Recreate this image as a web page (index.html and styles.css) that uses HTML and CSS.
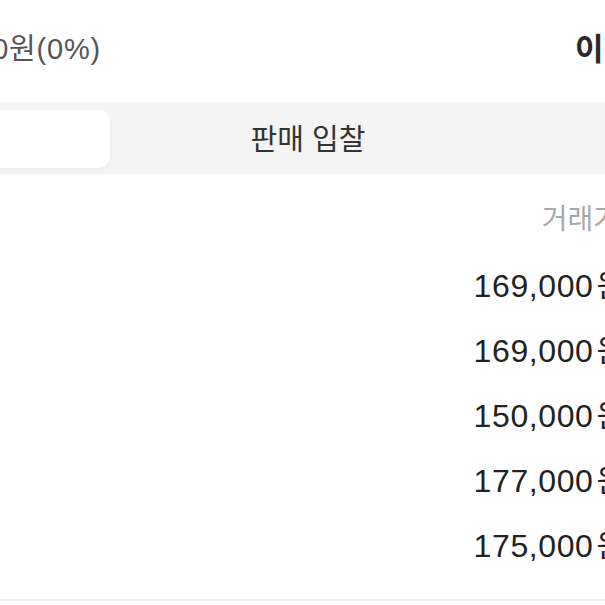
FILE: index.html
```html
<!DOCTYPE html>
<html lang="ko">
<head>
<meta charset="utf-8">
<title>시세</title>
<link rel="stylesheet" href="styles.css">
</head>
<body>
<div class="screen">
  <div class="summary">
    <span class="change">+0원(0%)</span>
    <span class="recent">이전 거래</span>
  </div>
  <div class="tabs">
    <div class="tab active">체결 거래</div>
    <div class="tab">판매 입찰</div>
    <div class="tab">구매 입찰</div>
  </div>
  <div class="table">
    <div class="row head">
      <span class="size">사이즈</span>
      <span class="price">거래가</span>
      <span class="date">거래일</span>
    </div>
    <div class="row">
      <span class="size">270</span>
      <span class="price"><span class="num">169,000</span>원</span>
      <span class="date">23/05/12</span>
    </div>
    <div class="row">
      <span class="size">265</span>
      <span class="price"><span class="num">169,000</span>원</span>
      <span class="date">23/05/10</span>
    </div>
    <div class="row">
      <span class="size">260</span>
      <span class="price"><span class="num">150,000</span>원</span>
      <span class="date">23/05/08</span>
    </div>
    <div class="row">
      <span class="size">275</span>
      <span class="price"><span class="num">177,000</span>원</span>
      <span class="date">23/05/05</span>
    </div>
    <div class="row">
      <span class="size">270</span>
      <span class="price"><span class="num">175,000</span>원</span>
      <span class="date">23/05/02</span>
    </div>
  </div>
  <div class="divider"></div>
</div>
</body>
</html>
```

FILE: styles.css
```css
html, body {
  margin: 0;
  padding: 0;
  background: #ffffff;
  overflow: hidden;
}

body {
  width: 605px;
  height: 605px;
  font-family: "Liberation Sans", "Noto Sans CJK KR", sans-serif;
  color: #222222;
}

.screen {
  margin-left: -293px;
  width: 1202px;
}

.summary {
  display: flex;
  align-items: center;
  gap: 474px;
  height: 102px;
  padding-bottom: 10px;
  box-sizing: border-box;
}

.change {
  flex: 0 0 394px;
  text-align: right;
  font-size: 29px;
  letter-spacing: 0.8px;
  color: #555555;
  white-space: nowrap;
}

.recent {
  font-size: 31px;
  font-weight: 700;
  color: #2a2a2a;
  white-space: nowrap;
  font-family: "Noto Sans CJK KR", sans-serif;
}

.tabs {
  display: grid;
  grid-template-columns: repeat(3, 1fr);
  background: #f4f4f4;
  padding: 8px 7px 6px;
  height: 72px;
  box-sizing: border-box;
}

.tab {
  display: flex;
  align-items: center;
  justify-content: center;
  font-family: "Noto Sans CJK KR", sans-serif;
  font-size: 29px;
  color: #333333;
  border-radius: 11px;
  padding-bottom: 5px;
  box-sizing: border-box;
}

.tab.active {
  background: #ffffff;
  box-shadow: 0 1px 3px rgba(0, 0, 0, 0.06);
}

.table {
  margin-top: 17px;
}

.row {
  display: grid;
  grid-template-columns: 1fr 300px 260px;
  align-items: center;
  height: 65px;
  padding: 0 24px;
}

.row.head {
  height: 52px;
  margin-bottom: 8px;
}

.row.head span {
  font-family: "Noto Sans CJK KR", sans-serif;
  font-size: 28px;
  color: #a8a8a8;
}

.row.head .price {
  margin-right: 6px;
}

.size {
  font-size: 31px;
}

.price {
  text-align: right;
  font-size: 31px;
  white-space: nowrap;
  font-family: "Noto Sans CJK KR", sans-serif;
}

.num {
  font-family: "Liberation Sans", sans-serif;
  font-size: 32px;
  letter-spacing: 0.6px;
  margin-right: 3px;
}

.date {
  text-align: right;
  font-size: 31px;
}

.divider {
  margin-top: 23px;
  height: 2px;
  background: #ececec;
}
```
